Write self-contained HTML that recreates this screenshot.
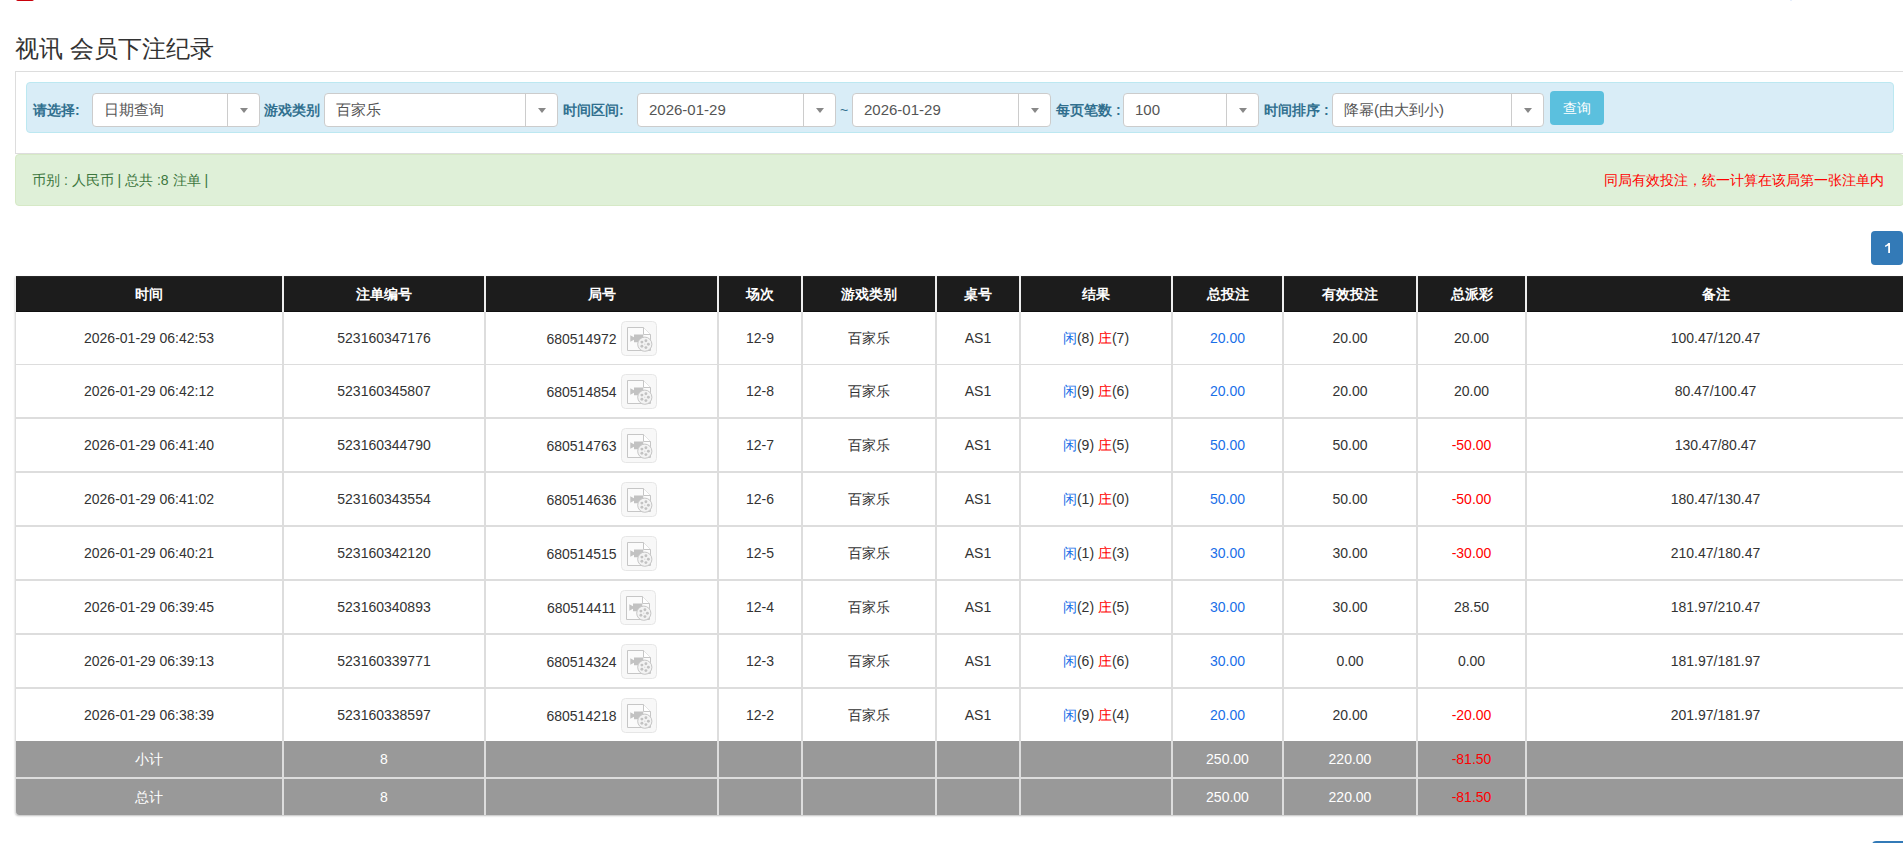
<!DOCTYPE html>
<html><head><meta charset="utf-8">
<style>
html,body{margin:0;padding:0;background:#fff;overflow:hidden;}
body{width:1903px;height:843px;position:relative;font-family:"Liberation Sans",sans-serif;color:#333;font-size:14px;}
.abs{position:absolute;}
#topred{left:16px;top:-3px;width:18px;height:4px;background:#c9000a;border-radius:0 0 2px 2px;}
#title{left:15px;top:35px;font-size:24px;line-height:28px;color:#333;white-space:nowrap;}
#panel{left:15px;top:71px;width:1888px;height:81px;border:1px solid #ddd;border-right:0;}
#filter{left:26px;top:82px;width:1866px;height:49px;background:#d9edf7;border:1px solid #bce8f1;border-radius:4px;}
.lbl{position:absolute;top:100px;font-size:14px;line-height:20px;font-weight:bold;color:#31708f;white-space:nowrap;}
.sel{position:absolute;top:93px;height:32px;background:#fff;border:1px solid #ccc;border-radius:4px;}
.sel .t{position:absolute;left:11px;top:6px;font-size:15px;line-height:20px;color:#555;white-space:nowrap;}
.sel .d{position:absolute;right:31px;top:0;bottom:0;width:1px;background:#ccc;}
.sel .a{position:absolute;right:11px;top:14px;width:0;height:0;border-left:4px solid transparent;border-right:4px solid transparent;border-top:5px solid #888;}
#btn{left:1550px;top:91px;width:54px;height:34px;background:#5bc0de;border-radius:4px;color:#fff;font-size:14px;line-height:34px;text-align:center;}
#green{left:15px;top:154px;width:1887px;height:50px;background:#dff0d8;border:1px solid #d6e9c6;border-radius:4px;}
#gtxt{left:32px;top:170px;font-size:14px;line-height:20px;color:#3c763d;white-space:nowrap;}
#rtxt{left:1604px;top:170px;font-size:14px;line-height:20px;color:#f00;white-space:nowrap;}
.pg{position:absolute;width:32px;height:34px;background:#337ab7;border-radius:4px;color:#fff;font-size:14px;line-height:34px;text-align:center;}
#tbl{position:absolute;left:15px;top:276px;border-collapse:separate;border-spacing:0;table-layout:fixed;width:1890px;font-size:14px;box-shadow:0 1px 2px rgba(0,0,0,.25);border-radius:0 0 4px 4px;}
#tbl th{box-shadow:inset 0 2px 1px -1px #2c2c2c,inset 0 -1px 0 #101010;background:#1c1c1c;color:#fff;font-weight:bold;height:36px;padding:0;border-left:1px solid #eee;border-right:1px solid #eee;text-align:center;line-height:20px;}
#tbl th:first-child{border-left:1px solid #eee;}
#tbl td{padding:0;text-align:center;border-left:1px solid #ddd;border-right:1px solid #ddd;border-bottom:2px solid #ddd;line-height:20px;white-space:nowrap;}
#tbl td:first-child{border-left:1px solid #ddd;}
#tbl tr.r td{height:52px;}
#tbl tr.last td{border-bottom:0;}
#tbl tr.f td{height:52px;border-bottom-width:1px;}
#tbl tr.s td{background:#999;color:#fff;height:36px;border-left:1px solid #ddd;border-right:1px solid #ddd;border-bottom:0;}
#tbl tr.s2 td:first-child{border-bottom-left-radius:4px;}
#tbl tr.s1 td{border-bottom:2px solid #ddd;height:36px;}
.b{color:#1a6fe8;}
.rd,#tbl tr td.rd{color:#f00;}
.ic{display:inline-block;vertical-align:middle;width:36px;height:35px;margin-left:4px;position:relative;top:0px;}
.n{position:relative;top:2px;}
</style></head>
<body>
<div id="topred" class="abs"></div>
<div id="title" class="abs">视讯 会员下注纪录</div>
<div id="panel" class="abs"></div>
<div id="filter" class="abs"></div>

<div class="lbl" style="left:33px">请选择:</div>
<div class="sel" style="left:92px;width:166px"><div class="t">日期查询</div><div class="d"></div><div class="a"></div></div>
<div class="lbl" style="left:264px">游戏类别</div>
<div class="sel" style="left:324px;width:232px"><div class="t">百家乐</div><div class="d"></div><div class="a"></div></div>
<div class="lbl" style="left:563px">时间区间:</div>
<div class="sel" style="left:637px;width:197px"><div class="t">2026-01-29</div><div class="d"></div><div class="a"></div></div>
<div class="lbl" style="left:840px;font-weight:normal">~</div>
<div class="sel" style="left:852px;width:197px"><div class="t">2026-01-29</div><div class="d"></div><div class="a"></div></div>
<div class="lbl" style="left:1056px">每页笔数 :</div>
<div class="sel" style="left:1123px;width:134px"><div class="t">100</div><div class="d"></div><div class="a"></div></div>
<div class="lbl" style="left:1264px">时间排序 :</div>
<div class="sel" style="left:1332px;width:210px"><div class="t">降幂(由大到小)</div><div class="d"></div><div class="a"></div></div>
<div id="btn" class="abs">查询</div>

<div id="green" class="abs"></div>
<div id="gtxt" class="abs">币别 : 人民币 | 总共 :8 注单 |</div>
<div id="rtxt" class="abs">同局有效投注，统一计算在该局第一张注单内</div>

<div class="pg" style="left:1871px;top:231px;"><svg width="32" height="34" style="position:absolute;left:0;top:0"><path d="M17.2 12H19V22H17.2V14.5Q16 15.4 14.1 15.9V14.5Q16.3 13.6 17.2 12Z" fill="#fff"/></svg></div>
<div class="pg" style="left:1872px;top:841px;width:40px;"></div>
<div class="abs" style="left:1790px;top:0;width:2px;height:1px;background:#e6eefc"></div>

<svg width="0" height="0" style="position:absolute">
<defs>
<symbol id="vid" viewBox="0 0 36 35">
<rect x="0.5" y="0.5" width="35" height="34" rx="4" fill="#f8f8f8" stroke="#e6e6e6"/>
<path d="M6.5 6.5H22.5L29.5 13.5V29.5H6.5Z" fill="#fbfbfb" stroke="#c6c6c6"/>
<path d="M22.5 6.5V13.5H29.5" fill="#fff" stroke="#c6c6c6"/>
<path d="M9.3 14.2L13 16.2V13.6H22.3V21.2H13V18.8L9.3 20.8Z" fill="#c2c2c2"/>
<circle cx="23.8" cy="23.2" r="7.1" fill="#f3f3f3" stroke="#c6c6c6"/>
<circle cx="27.4" cy="23.2" r="1.45" fill="#c2c2c2"/>
<circle cx="24.9" cy="26.6" r="1.45" fill="#c2c2c2"/>
<circle cx="20.9" cy="25.3" r="1.45" fill="#c2c2c2"/>
<circle cx="20.9" cy="21.1" r="1.45" fill="#c2c2c2"/>
<circle cx="24.9" cy="19.8" r="1.45" fill="#c2c2c2"/>
<circle cx="23.8" cy="23.2" r="0.6" fill="#d0d0d0"/>
</symbol>
</defs>
</svg>

<table id="tbl">
<colgroup>
<col style="width:268px"><col style="width:202px"><col style="width:233px"><col style="width:84px"><col style="width:134px"><col style="width:84px"><col style="width:152px"><col style="width:111px"><col style="width:134px"><col style="width:109px"><col style="width:379px">
</colgroup>
<thead><tr><th>时间</th><th>注单编号</th><th>局号</th><th>场次</th><th>游戏类别</th><th>桌号</th><th>结果</th><th>总投注</th><th>有效投注</th><th>总派彩</th><th>备注</th></tr></thead>
<tbody>
<tr class="r f"><td>2026-01-29 06:42:53</td><td>523160347176</td><td><span class="n">680514972</span><svg class="ic"><use href="#vid"/></svg></td><td>12-9</td><td>百家乐</td><td>AS1</td><td><span class="b">闲</span>(8) <span class="rd">庄</span>(7)</td><td class="b">20.00</td><td>20.00</td><td>20.00</td><td>100.47/120.47</td></tr>
<tr class="r"><td>2026-01-29 06:42:12</td><td>523160345807</td><td><span class="n">680514854</span><svg class="ic"><use href="#vid"/></svg></td><td>12-8</td><td>百家乐</td><td>AS1</td><td><span class="b">闲</span>(9) <span class="rd">庄</span>(6)</td><td class="b">20.00</td><td>20.00</td><td>20.00</td><td>80.47/100.47</td></tr>
<tr class="r"><td>2026-01-29 06:41:40</td><td>523160344790</td><td><span class="n">680514763</span><svg class="ic"><use href="#vid"/></svg></td><td>12-7</td><td>百家乐</td><td>AS1</td><td><span class="b">闲</span>(9) <span class="rd">庄</span>(5)</td><td class="b">50.00</td><td>50.00</td><td class="rd">-50.00</td><td>130.47/80.47</td></tr>
<tr class="r"><td>2026-01-29 06:41:02</td><td>523160343554</td><td><span class="n">680514636</span><svg class="ic"><use href="#vid"/></svg></td><td>12-6</td><td>百家乐</td><td>AS1</td><td><span class="b">闲</span>(1) <span class="rd">庄</span>(0)</td><td class="b">50.00</td><td>50.00</td><td class="rd">-50.00</td><td>180.47/130.47</td></tr>
<tr class="r"><td>2026-01-29 06:40:21</td><td>523160342120</td><td><span class="n">680514515</span><svg class="ic"><use href="#vid"/></svg></td><td>12-5</td><td>百家乐</td><td>AS1</td><td><span class="b">闲</span>(1) <span class="rd">庄</span>(3)</td><td class="b">30.00</td><td>30.00</td><td class="rd">-30.00</td><td>210.47/180.47</td></tr>
<tr class="r"><td>2026-01-29 06:39:45</td><td>523160340893</td><td><span class="n">680514411</span><svg class="ic"><use href="#vid"/></svg></td><td>12-4</td><td>百家乐</td><td>AS1</td><td><span class="b">闲</span>(2) <span class="rd">庄</span>(5)</td><td class="b">30.00</td><td>30.00</td><td>28.50</td><td>181.97/210.47</td></tr>
<tr class="r"><td>2026-01-29 06:39:13</td><td>523160339771</td><td><span class="n">680514324</span><svg class="ic"><use href="#vid"/></svg></td><td>12-3</td><td>百家乐</td><td>AS1</td><td><span class="b">闲</span>(6) <span class="rd">庄</span>(6)</td><td class="b">30.00</td><td>0.00</td><td>0.00</td><td>181.97/181.97</td></tr>
<tr class="r last"><td>2026-01-29 06:38:39</td><td>523160338597</td><td><span class="n">680514218</span><svg class="ic"><use href="#vid"/></svg></td><td>12-2</td><td>百家乐</td><td>AS1</td><td><span class="b">闲</span>(9) <span class="rd">庄</span>(4)</td><td class="b">20.00</td><td>20.00</td><td class="rd">-20.00</td><td>201.97/181.97</td></tr>
<tr class="s s1"><td>小计</td><td>8</td><td></td><td></td><td></td><td></td><td></td><td>250.00</td><td>220.00</td><td class="rd">-81.50</td><td></td></tr>
<tr class="s s2"><td>总计</td><td>8</td><td></td><td></td><td></td><td></td><td></td><td>250.00</td><td>220.00</td><td class="rd">-81.50</td><td></td></tr>
</tbody>
</table>
</body></html>
